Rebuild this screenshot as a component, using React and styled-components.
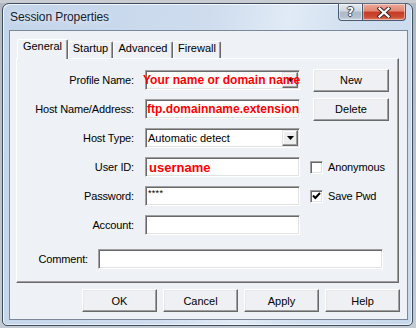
import React from 'react';
import styled, { createGlobalStyle } from 'styled-components';

const Global = createGlobalStyle`
  html, body { margin: 0; padding: 0; }
  body {
    width: 416px; height: 328px; overflow: hidden;
    background: #aeb4bb;
    font-family: "Liberation Sans", Arial, sans-serif;
    font-size: 11px; color: #000;
  }
`;

const Desktop = styled.div`
  box-sizing: border-box;
  width: 416px; height: 328px;
  padding: 3px 0 0 2px;
  background: linear-gradient(180deg, #c9cdd1 0, #c9cdd1 3px, #b3b9c0 3px, #c3cad2 100%);
`;

const Window = styled.div`
  box-sizing: border-box;
  width: 411px; height: 323px;
  border: 1px solid #3e4c60;
  border-radius: 7px 7px 5px 5px;
  padding: 0 4px 5px 6px;
  display: flex; flex-direction: column;
  background: linear-gradient(100deg, #c3d5ea 0%, #cedcee 45%, #e1ebf6 62%, #d2e0f0 75%, #c7d8ec 100%);
  box-shadow: inset 1px 1px 0 rgba(255,255,255,0.75), inset -1px -1px 0 rgba(255,255,255,0.6);
`;

const TitleBar = styled.div`
  height: 26px;
  display: flex; align-items: flex-start; justify-content: space-between;
  padding: 0 2px 0 1px;
`;

const TitleText = styled.div`
  margin-top: 5px;
  font-size: 12px; line-height: 16px;
  color: #15202e;
  letter-spacing: -0.1px;
  text-shadow: 0 0 6px rgba(255,255,255,0.9);
`;

const Captions = styled.div`
  display: flex;
  margin-top: -1px;
`;

const CaptionBtn = styled.div`
  box-sizing: border-box;
  width: ${p => p.$w}px; height: 18px;
  border: 1px solid #4a5a70;
  border-top-color: #5a6a80;
  ${p => p.$close
    ? `border-radius: 0 0 4px 0; border-left: none;
       background: linear-gradient(180deg, #eeaa9a 0%, #e08470 45%, #c63a24 50%, #cd4a32 80%, #e07a60 100%);`
    : `border-radius: 0 0 0 4px;
       background: linear-gradient(180deg, #e6ebf1 0%, #cdd5df 45%, #adb9c7 50%, #b3bfcc 80%, #cbd5df 100%);`}
  box-shadow: inset 0 0 0 1px rgba(255,255,255,0.45);
  display: flex; align-items: center; justify-content: center;
`;

const HelpGlyph = styled.span`
  font-family: "DejaVu Sans", sans-serif;
  font-weight: bold; font-size: 12px; line-height: 12px;
  color: #fff;
  text-shadow: 1px 0 0 #3c4656, -1px 0 0 #3c4656, 0 1px 0 #3c4656, 0 -1px 0 #3c4656;
`;

const Client = styled.div`
  flex: 1;
  box-sizing: border-box;
  border: 1px solid #7b889a;
  background: #eef1f5;
  padding: 8px 8px 7px 6px;
  display: flex; flex-direction: column;
`;

const Tabs = styled.div`
  display: flex; align-items: flex-end;
  height: 19px;
  margin-left: 1px;
`;

const Tab = styled.div`
  box-sizing: border-box;
  width: ${p => p.$w}px;
  height: ${p => (p.$active ? 20 : 17)}px;
  margin-bottom: ${p => (p.$active ? -1 : 0)}px;
  position: relative;
  z-index: ${p => (p.$active ? 2 : 1)};
  border: 1px solid;
  border-bottom: none;
  border-color: #fff #696969 transparent #fff;
  border-radius: 2px 2px 0 0;
  box-shadow: inset -1px 0 0 #a0a0a0;
  background: #eef1f5;
  text-align: center;
  line-height: 13px;
  white-space: nowrap;
`;

const Panel = styled.div`
  box-sizing: border-box;
  height: 225px;
  border: 1px solid;
  border-color: #fff #696969 #696969 #fff;
  box-shadow: inset -1px -1px 0 #a0a0a0;
  padding: 11px 0 13px 0;
  display: flex; flex-direction: column;
`;

const FormGrid = styled.div`
  display: grid;
  grid-template-columns: 128px 165px 1fr;
  grid-auto-rows: 20px;
  row-gap: 9px;
  align-items: center;
`;

const Label = styled.div`
  box-sizing: border-box;
  ${p => (p.$w ? `width: ${p.$w}px; flex: none;` : '')}
  text-align: right;
  padding-right: ${p => p.$pr ?? 11}px;
  white-space: nowrap;
  letter-spacing: -0.15px;
`;

const Field = styled.div`
  box-sizing: border-box;
  width: ${p => p.$w ?? 155}px;
  height: 20px;
  margin-left: ${p => p.$ml ?? 0}px;
  background: #fff;
  border: 1px solid;
  border-color: #a0a0a0 #fff #fff #a0a0a0;
  box-shadow: inset 1px 1px 0 #696969, inset -1px -1px 0 #e3e3e3;
  padding: 0 2px 0 2px;
  display: flex; align-items: center;
  white-space: nowrap;
`;

const FieldText = styled.span`
  flex: 1; min-width: 0;
  position: relative; z-index: 1;
  margin-left: ${p => p.$ml ?? 0}px;
  white-space: nowrap;
  overflow: visible;
  ${p => p.$red ? `color: #ff0000; font-weight: bold; font-size: ${p.$fs ?? 12}px;` : ''}
`;

const Masked = styled.span`
  flex: 1;
  font-size: 9px;
  line-height: 9px;
  align-self: flex-start;
  margin-top: 2px;
  letter-spacing: 0.3px;
`;

const ArrowBtn = styled.div`
  box-sizing: border-box;
  flex: none;
  width: 16px; height: 16px;
  margin-right: -1px;
  border: 1px solid;
  border-color: #e3e3e3 #696969 #696969 #e3e3e3;
  box-shadow: inset -1px -1px 0 #a0a0a0, inset 1px 1px 0 #fff;
  background: #eceef0;
  display: flex; align-items: center; justify-content: center;
`;

const SideButtonCell = styled.div`
  display: flex; align-items: center;
`;

const Button = styled.div`
  box-sizing: border-box;
  width: ${p => p.$w ?? 75}px;
  height: 23px;
  margin-left: ${p => p.$ml ?? 0}px;
  border: 1px solid;
  border-color: #fff #696969 #696969 #fff;
  box-shadow: inset -1px -1px 0 #a0a0a0, inset 1px 1px 0 #e8e8e8;
  background: #eef0f3;
  display: flex; align-items: center; justify-content: center;
  white-space: nowrap;
`;

const CheckRow = styled.div`
  display: flex; align-items: center;
  letter-spacing: -0.15px;
`;

const CheckBox = styled.div`
  box-sizing: border-box;
  width: 13px; height: 13px;
  background: #fff;
  border: 1px solid;
  border-color: #a0a0a0 #fff #fff #a0a0a0;
  box-shadow: inset 1px 1px 0 #696969, inset -1px -1px 0 #e3e3e3;
  display: flex; align-items: center; justify-content: center;
  margin-right: 5px;
`;

const CommentRow = styled.div`
  display: flex; align-items: center;
  margin-top: 14px;
`;

const Footer = styled.div`
  display: flex; justify-content: flex-end;
  gap: 6px;
  margin-top: 6px;
  margin-right: -1px;
`;

const DownArrow = () => (
  <svg width="7" height="4" viewBox="0 0 7 4">
    <path d="M0 0H7L3.5 4Z" fill="#000" />
  </svg>
);

const CloseX = () => (
  <svg width="14" height="11" viewBox="0 0 14 11">
    <path d="M2.5 1.5L11.5 9.5M11.5 1.5L2.5 9.5" stroke="#3a2a2a" strokeWidth="4.2" strokeLinecap="square" />
    <path d="M2.5 1.5L11.5 9.5M11.5 1.5L2.5 9.5" stroke="#fff" strokeWidth="2.2" strokeLinecap="square" />
  </svg>
);

const Check = () => (
  <svg width="9" height="8" viewBox="0 0 9 8">
    <path d="M1 3.5L3.3 6L8 1" stroke="#000" strokeWidth="1.9" fill="none" />
  </svg>
);

export default function App() {
  return (
    <>
      <Global />
      <Desktop>
        <Window>
          <TitleBar>
            <TitleText>Session Properties</TitleText>
            <Captions>
              <CaptionBtn $w={25}><HelpGlyph>?</HelpGlyph></CaptionBtn>
              <CaptionBtn $w={43} $close><CloseX /></CaptionBtn>
            </Captions>
          </TitleBar>
          <Client>
            <Tabs>
              <Tab $w={51} $active>General</Tab>
              <Tab $w={45}>Startup</Tab>
              <Tab $w={60}>Advanced</Tab>
              <Tab $w={48}>Firewall</Tab>
            </Tabs>
            <Panel>
              <FormGrid>
                <Label>Profile Name:</Label>
                <Field>
                  <FieldText $red $ml={-5}>Your name or domain name</FieldText>
                  <ArrowBtn><DownArrow /></ArrowBtn>
                </Field>
                <SideButtonCell><Button $w={76} $ml={3}>New</Button></SideButtonCell>

                <Label>Host Name/Address:</Label>
                <Field><FieldText $red $ml={-1}>ftp.domainname.extension</FieldText></Field>
                <SideButtonCell><Button $w={76} $ml={3}>Delete</Button></SideButtonCell>

                <Label>Host Type:</Label>
                <Field>
                  <FieldText>Automatic detect</FieldText>
                  <ArrowBtn><DownArrow /></ArrowBtn>
                </Field>
                <div />

                <Label>User ID:</Label>
                <Field><FieldText $red $fs={13} $ml={1}>username</FieldText></Field>
                <CheckRow><CheckBox />Anonymous</CheckRow>

                <Label>Password:</Label>
                <Field><Masked>****</Masked></Field>
                <CheckRow><CheckBox><Check /></CheckBox>Save Pwd</CheckRow>

                <Label>Account:</Label>
                <Field />
                <div />
              </FormGrid>
              <CommentRow>
                <Label $w={71} $pr={0}>Comment:</Label>
                <Field $w={285} $ml={10} />
              </CommentRow>
            </Panel>
            <Footer>
              <Button>OK</Button>
              <Button>Cancel</Button>
              <Button>Apply</Button>
              <Button>Help</Button>
            </Footer>
          </Client>
        </Window>
      </Desktop>
    </>
  );
}
